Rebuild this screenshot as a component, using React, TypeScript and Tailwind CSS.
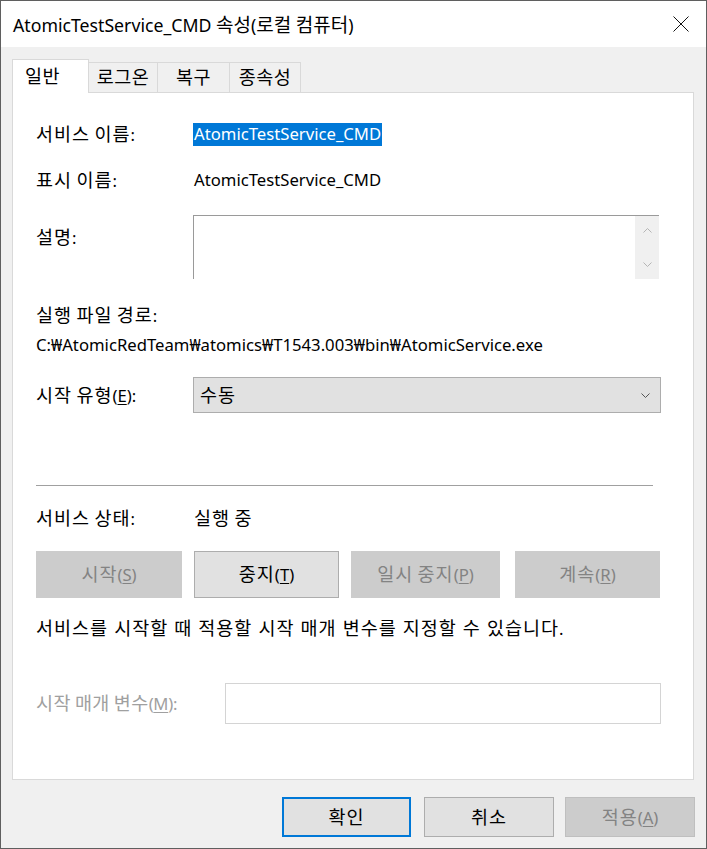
import React from "react";

const font = {
  fontFamily: "'Noto Sans', 'Noto Sans CJK KR', sans-serif",
};

// Hangul runs are set a little larger so they take the room Malgun Gothic takes
const HANGUL = /([\u1100-\u11FF\u3130-\u318F\uAC00-\uD7AF]+)/;

function kr(text: string, cls = "text-[18.5px] tracking-[1px]") {
  return (
    <span>
      {text.split(HANGUL).map((part, i) =>
        i % 2 === 1 ? (
          <span key={i} className={cls}>
            {part}
          </span>
        ) : (
          part
        )
      )}
    </span>
  );
}

function Mn({ c }: { c: string }) {
  return (
    <span>
      (<span className="underline underline-offset-2">{c}</span>)
    </span>
  );
}

function Chevron({ up = false, className = "" }: { up?: boolean; className?: string }) {
  return (
    <svg width="9" height="5" viewBox="0 0 9 5" className={className}>
      <path
        d={up ? "M0.5 4.5 L4.5 0.5 L8.5 4.5" : "M0.5 0.5 L4.5 4.5 L8.5 0.5"}
        fill="none"
        stroke="currentColor"
        strokeWidth="1"
      />
    </svg>
  );
}

export default function App() {
  const tabs = [
    { label: "로그온", w: "w-[69px]" },
    { label: "복구", w: "w-[72px]" },
    { label: "종속성", w: "w-[71px]" },
  ];

  return (
    <div
      style={font}
      className="w-[707px] h-[849px] bg-[#f0f0f0] border border-[#5f5f5f] flex flex-col text-black overflow-hidden"
    >
      {/* title bar */}
      <div className="h-[46px] bg-white flex items-center justify-between pl-[12px] pr-[17px] shrink-0">
        <span className="text-[17.7px] leading-none mt-[3px] whitespace-nowrap">
          AtomicTestService_CMD {kr("속성", "text-[19px]")}({kr("로컬 컴퓨터", "text-[19px]")})
        </span>
        <svg width="16" height="16" viewBox="0 0 16 16" className="mt-[-1px]">
          <path d="M0.5 0.5 L15.5 15.5 M15.5 0.5 L0.5 15.5" stroke="#111" strokeWidth="1" />
        </svg>
      </div>

      {/* body */}
      <div className="flex-1 px-[11px] pt-[12px] flex flex-col">
        {/* tabs */}
        <div className="flex items-end h-[33px] relative z-10">
          <div className="w-[77px] h-[34px] bg-white border border-b-0 border-[#d9d9d9] flex items-start pl-[12px] pt-[2px] text-[18.5px] tracking-[0.5px] leading-[28px] mb-[-1px]">
            일반
          </div>
          {tabs.map((t) => (
            <div
              key={t.label}
              className={`${t.w} h-[30px] bg-[#f0f0f0] border border-l-0 border-b-0 border-[#d9d9d9] flex items-center justify-center text-[18.5px] tracking-[0.5px] leading-none pb-[1px]`}
            >
              {t.label}
            </div>
          ))}
        </div>

        {/* panel */}
        <div className="w-[682px] h-[688px] bg-white border border-[#d9d9d9] flex flex-col pl-[23px] pr-[31px] text-[16.7px] leading-none whitespace-nowrap">
          <div className="flex items-center h-[24px] mt-[29px]">
            <span className="w-[157px]">{kr("서비스 이름:")}</span>
            <span className="bg-[#0078d7] text-white px-[1px] h-[23px] flex items-center">
              AtomicTestService_CMD
            </span>
          </div>

          <div className="flex items-center h-[24px] mt-[22px]">
            <span className="w-[158px]">{kr("표시 이름:")}</span>
            <span>AtomicTestService_CMD</span>
          </div>

          <div className="flex items-start h-[64px] mt-[23px]">
            <span className="w-[157px] mt-[10px] leading-[24px]">{kr("설명:")}</span>
            <div className="w-[466px] h-[64px] border-t border-l border-[#9a9a9a] flex justify-end">
              <div className="w-[24px] h-full bg-[#f0f0f0] flex flex-col items-center justify-between py-[12px] text-[#b5b5b5]">
                <Chevron up />
                <Chevron />
              </div>
            </div>
          </div>

          <div className="flex items-center h-[24px] mt-[24px]">{kr("실행 파일 경로:")}</div>
          <div className="flex items-center h-[24px] mt-[6px]">
            <span>C:₩AtomicRedTeam₩atomics₩T1543.003₩bin₩AtomicService.exe</span>
          </div>

          <div className="flex items-center h-[36px] mt-[20px]">
            <span className="w-[157px]">
              {kr("시작 유형")}
              <Mn c="E" />:
            </span>
            <div className="w-[468px] h-[36px] bg-[#e1e1e1] border border-[#adadad] flex items-center justify-between pl-[6px] pr-[10px]">
              {kr("수동")}
              <Chevron className="text-[#555]" />
            </div>
          </div>

          <div className="h-px bg-[#a0a0a0] mt-[72px] w-[617px]" />

          <div className="flex items-center h-[24px] mt-[20px]">
            <span className="w-[158px]">{kr("서비스 상태:")}</span>
            {kr("실행 중")}
          </div>

          <div className="flex h-[47px] mt-[21px]">
            <div className="w-[146px] bg-[#cccccc] border border-[#cccccc] text-[#838383] flex items-center justify-center">
              <span>
                {kr("시작")}
                <Mn c="S" />
              </span>
            </div>
            <div className="w-[145px] ml-[12px] bg-[#e1e1e1] border border-[#adadad] flex items-center justify-center">
              <span>
                {kr("중지")}
                <Mn c="T" />
              </span>
            </div>
            <div className="w-[149px] ml-[12px] bg-[#cccccc] border border-[#cccccc] text-[#838383] flex items-center justify-center">
              <span>
                {kr("일시 중지")}
                <Mn c="P" />
              </span>
            </div>
            <div className="w-[145px] ml-[15px] bg-[#cccccc] border border-[#cccccc] text-[#838383] flex items-center justify-center">
              <span>
                {kr("계속")}
                <Mn c="R" />
              </span>
            </div>
          </div>

          <div className="flex items-center h-[24px] mt-[18px] [word-spacing:1.7px]">
            {kr("서비스를 시작할 때 적용할 시작 매개 변수를 지정할 수 있습니다.")}
          </div>

          <div className="flex items-center h-[41px] mt-[43px]">
            <span className="w-[189px] text-[#a0a0a0] tracking-[-0.3px]">
              {kr("시작 매개 변수", "text-[18.5px] tracking-[0.4px]")}
              <Mn c="M" />:
            </span>
            <div className="w-[436px] h-[41px] border border-[#d4d4d4] bg-white" />
          </div>
        </div>

        {/* dialog buttons */}
        <div className="flex justify-end mt-[17px] text-[16.7px] leading-none">
          <div className="w-[129px] h-[40px] bg-[#e1e1e1] border-2 border-[#0078d7] flex items-center justify-center">
            {kr("확인")}
          </div>
          <div className="w-[130px] h-[40px] ml-[13px] bg-[#e1e1e1] border border-[#adadad] flex items-center justify-center">
            {kr("취소")}
          </div>
          <div className="w-[130px] h-[40px] ml-[11px] bg-[#cccccc] border border-[#bfbfbf] text-[#838383] flex items-center justify-center">
            <span>
              {kr("적용")}
              <Mn c="A" />
            </span>
          </div>
        </div>
      </div>
    </div>
  );
}
